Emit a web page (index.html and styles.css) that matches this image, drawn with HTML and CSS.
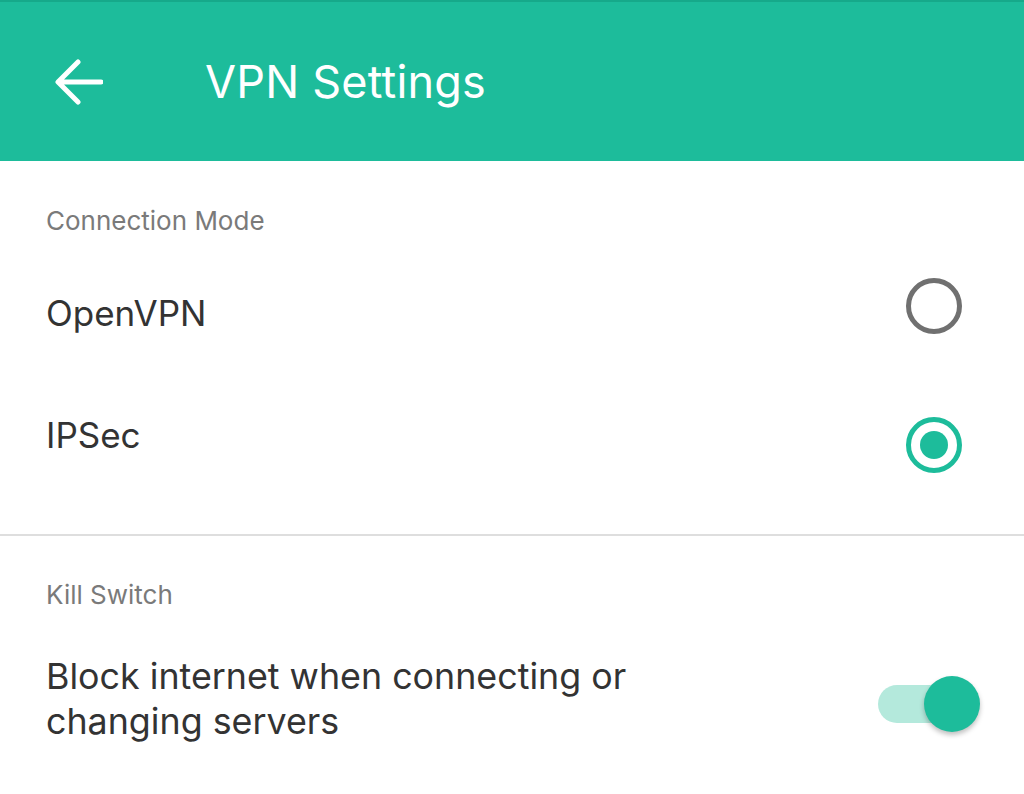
FILE: index.html
```html
<!DOCTYPE html>
<html lang="en">
<head>
  <meta charset="UTF-8" />
  <title>VPN Settings</title>
  <link rel="stylesheet" href="styles.css">
</head>
<body>

<header class="topbar">
  <button class="back" aria-label="Back">
    <svg width="48" height="46" viewBox="0 0 48 46">
      <path d="M46 23H4M23 3L3 23l20 20" fill="none" stroke="#fff" stroke-width="5" stroke-linecap="round" stroke-linejoin="round"/>
    </svg>
  </button>
  <h1 class="title">VPN Settings</h1>
</header>

<section class="group">
  <div class="group-label">Connection Mode</div>
  <label class="row row-first">
    <span class="row-text">OpenVPN</span>
    <span class="radio"></span>
  </label>
  <label class="row row-second">
    <span class="row-text">IPSec</span>
    <span class="radio checked"></span>
  </label>
</section>

<section class="group group-kill">
  <div class="group-label">Kill Switch</div>
  <div class="row row-switch">
    <span class="row-text">Block internet when connecting or<br>changing servers</span>
    <span class="switch on"><span class="thumb"></span></span>
  </div>
</section>

</body>
</html>
```

FILE: styles.css
```css
body {
  margin: 0; padding: 0;
  font-family: Inter, 'Noto Sans', sans-serif;
  background: #fff;
  color: #333;
  overflow: hidden;
}
.topbar {
  height: 161px;
  background: #1dbc9b;
  border-top: 2px solid #16a98a;
  box-sizing: border-box;
  display: flex;
  align-items: center;
  padding-left: 55px;
}
.back {
  background: none;
  border: none;
  padding: 0;
  display: flex;
}
.title {
  margin: 0 0 0 102px;
  font-weight: 400;
  font-size: 45px;
  color: #fff;
  letter-spacing: 0.2px;
}
.group {
  padding: 0 62px 0 46px;
}
.group-label {
  font-size: 26px;
  color: #7a7a7a;
  padding-top: 44px;
  height: 40px;
}
.row {
  display: flex;
  align-items: center;
  justify-content: space-between;
}
.row-first {
  height: 122px;
  margin-top: 7px;
}
.row-second {
  height: 121px;
  margin-bottom: 39px;
}
.row-text {
  font-size: 35px;
  color: #333;
}
.radio {
  width: 46px;
  height: 46px;
  border: 5px solid #707070;
  border-radius: 50%;
  display: flex;
  align-items: center;
  justify-content: center;
  margin-top: -14px;
}
.radio.checked {
  border-color: #1dbc9b;
  margin-top: 20px;
}
.radio.checked::after {
  content: "";
  width: 28px;
  height: 28px;
  border-radius: 50%;
  background: #1dbc9b;
}
.group-kill {
  border-top: 2px solid #dedede;
  padding-right: 44px;
}
.group-kill .group-label {
  padding-top: 43px;
}
.row-switch {
  padding-top: 35px;
}
.row-switch .row-text {
  font-size: 35.8px;
  line-height: 45px;
}
.switch {
  position: relative;
  width: 94px;
  height: 38px;
  border-radius: 19px;
  background: #b4e9dc;
  margin-top: 10px;
  margin-right: 8px;
}
.thumb {
  position: absolute;
  top: -9px;
  right: -8px;
  width: 56px;
  height: 56px;
  border-radius: 50%;
  background: #1dbc9b;
  box-shadow: 0 3px 5px rgba(0,0,0,0.25);
}
```
